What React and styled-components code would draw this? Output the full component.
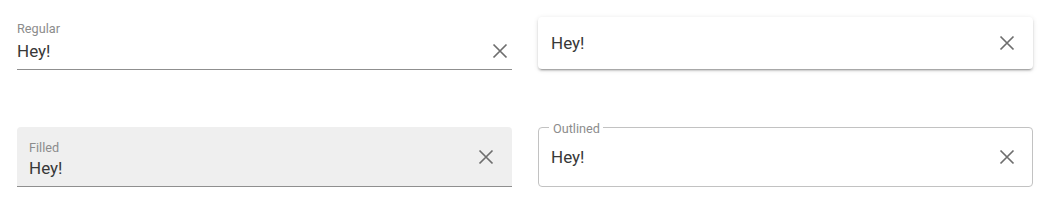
import React from "react";
import styled, { createGlobalStyle } from "styled-components";

const GlobalStyle = createGlobalStyle`
  html, body {
    margin: 0;
    padding: 0;
    background: #fff;
  }
  body {
    font-family: Roboto, "Liberation Sans", Arial, sans-serif;
    color: #333;
  }
`;

const Page = styled.div`
  display: grid;
  grid-template-columns: 495px 495px;
  column-gap: 26px;
  row-gap: 57px;
  padding: 17px 0 0 17px;
`;

const Label = styled.div`
  font-size: 12.7px;
  line-height: 14px;
  color: #8c8c8c;
`;

const Value = styled.div`
  flex: 1;
  font-size: 17px;
  line-height: 20px;
  color: #383838;
`;

const ClearButton = styled.button`
  display: flex;
  align-items: center;
  justify-content: center;
  width: 24px;
  height: 24px;
  padding: 0;
  border: 0;
  background: transparent;
  color: #6e6e6e;
  cursor: pointer;
  flex-shrink: 0;
`;

const CloseIcon = () => (
  <svg width="24" height="24" viewBox="0 0 24 24">
    <path
      d="M5.5 5.5L18.5 18.5M18.5 5.5L5.5 18.5"
      stroke="currentColor"
      strokeWidth="1.7"
      fill="none"
    />
  </svg>
);

/* regular: label on top, underline below */
const RegularBox = styled.div`
  height: 53px;
  padding: 5px 0 0;
  box-sizing: border-box;
  border-bottom: 1px solid #8f8f8f;

  ${Label} {
    margin-bottom: 3px;
  }
`;

const InputRow = styled.div`
  display: flex;
  align-items: center;
  height: 24px;

  ${Value} {
    line-height: 24px;
  }
`;

const SoloBox = styled.div`
  display: flex;
  align-items: center;
  height: 52px;
  padding: 0 14px 0 13px;
  box-sizing: border-box;
  border-radius: 4px;
  background: #fff;
  box-shadow: 0 3px 1px -2px rgba(0, 0, 0, 0.2), 0 2px 2px 0 rgba(0, 0, 0, 0.14),
    0 1px 5px 0 rgba(0, 0, 0, 0.12);
`;

const FilledBox = styled.div`
  display: flex;
  align-items: center;
  height: 60px;
  box-sizing: border-box;
  padding: 0 14px 0 12px;
  background: #efefef;
  border-radius: 4px 4px 0 0;
  border-bottom: 1px solid #8f8f8f;
`;

const FilledContent = styled.div`
  flex: 1;
  align-self: flex-end;
  padding-bottom: 8px;

  ${Label} {
    margin-bottom: 3px;
  }
`;

const OutlinedBox = styled.div`
  position: relative;
  display: flex;
  align-items: center;
  height: 60px;
  box-sizing: border-box;
  padding: 0 13px 0 12px;
  border: 1px solid #c2c2c2;
  border-radius: 4px;
`;

const Legend = styled(Label)`
  position: absolute;
  top: -6px;
  left: 10px;
  padding: 0 3px 0 4px;
  background: #fff;
`;

const Clear = () => (
  <ClearButton aria-label="clear">
    <CloseIcon />
  </ClearButton>
);

export default function App() {
  return (
    <>
      <GlobalStyle />
      <Page>
        <RegularBox>
          <Label>Regular</Label>
          <InputRow>
            <Value>Hey!</Value>
            <Clear />
          </InputRow>
        </RegularBox>

        <SoloBox>
          <Value>Hey!</Value>
          <Clear />
        </SoloBox>

        <FilledBox>
          <FilledContent>
            <Label>Filled</Label>
            <Value>Hey!</Value>
          </FilledContent>
          <Clear />
        </FilledBox>

        <OutlinedBox>
          <Legend>Outlined</Legend>
          <Value>Hey!</Value>
          <Clear />
        </OutlinedBox>
      </Page>
    </>
  );
}
